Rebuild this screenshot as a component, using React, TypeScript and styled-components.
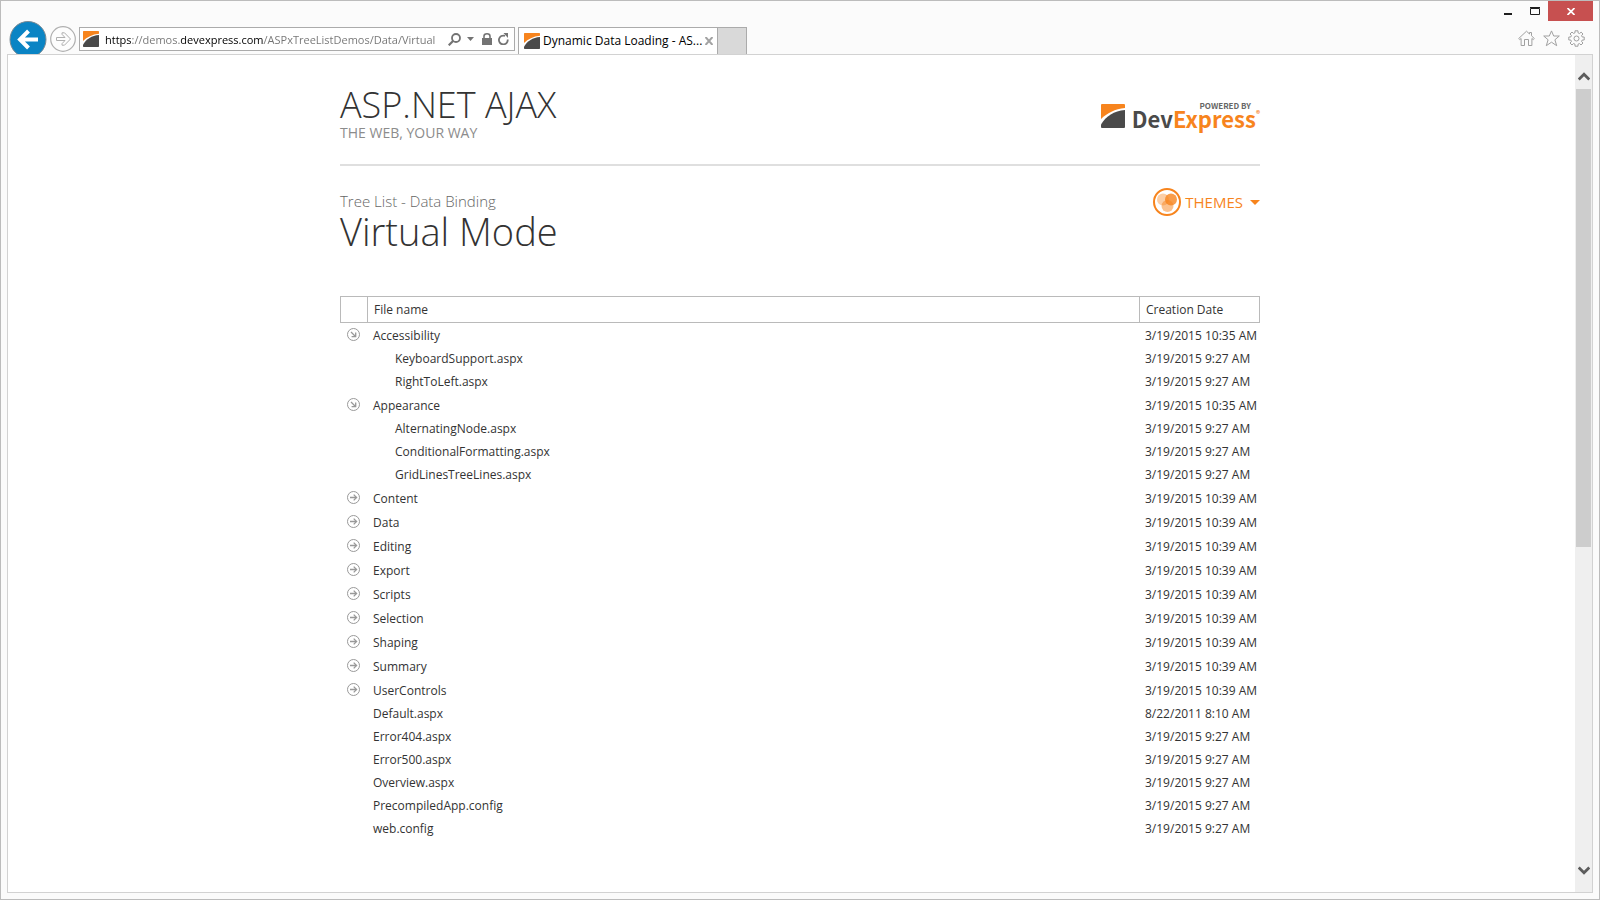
import React, { useState } from "react";
import styled, { createGlobalStyle } from "styled-components";

const GlobalStyle = createGlobalStyle`
  * { box-sizing: border-box; }
  body { margin: 0; background: #fbfbfb; color: #333; font: 12px/16px "Open Sans", "Noto Sans", sans-serif; }
  button { font: inherit; color: inherit; background: none; border: 0; padding: 0; cursor: pointer; }
  svg { display: block; }
`;

const Window = styled.div`
  display: flex;
  flex-direction: column;
  min-height: 100vh;
  border: 1px solid #bcbcbc;
  background: #fbfbfb;
  padding: 0 6px 6px;
`;

const TitleBar = styled.div`
  display: flex;
  justify-content: flex-end;
  height: 20px;
`;

const WindowButton = styled.button<{ $close?: boolean }>`
  display: flex;
  align-items: center;
  justify-content: center;
  width: ${(p) => (p.$close ? 45 : 27)}px;
  height: 20px;
  background: ${(p) => (p.$close ? "#c75050" : "transparent")};
`;

const Toolbar = styled.div`
  display: flex;
  height: 33px;
  overflow: hidden;
`;

const BackButton = styled.button`
  width: 38px;
  height: 38px;
  margin-left: 2px;
`;

const ForwardButton = styled.button`
  width: 26px;
  height: 26px;
  margin: 5px 3px 0;
`;

const AddressBar = styled.div`
  display: flex;
  align-items: center;
  width: 436px;
  height: 24px;
  margin-top: 6px;
  padding: 0 5px 0 3px;
  gap: 6px;
  border: 1px solid #ababab;
  background: #fff;
`;

const AddressInput = styled.input`
  flex: 1;
  min-width: 0;
  height: 22px;
  padding: 0;
  border: 0;
  outline: 0;
  font: 11px/20px "Open Sans", "Noto Sans", sans-serif;
  color: transparent;
  background: linear-gradient(to right, #000 0 27px, #737373 27px 75px, #000 75px 159px, #737373 159px);
  background-clip: text;
  -webkit-background-clip: text;
`;

const TabStrip = styled.div`
  display: flex;
  margin: 6px 0 0 3px;
`;

const Tab = styled.div`
  display: flex;
  align-items: center;
  gap: 3px;
  width: 200px;
  padding: 0 4px 0 5px;
  border: 1px solid #ababab;
  border-bottom: 0;
  background: #fff;
`;

const TabTitle = styled.button`
  flex: 1;
  min-width: 0;
  white-space: nowrap;
  text-align: left;
  color: #000;
`;

const NewTab = styled.button`
  width: 29px;
  border: 1px solid #ababab;
  border-width: 1px 1px 0 0;
  background: #d9d9d9;
`;

const Tools = styled.div`
  display: flex;
  align-items: flex-start;
  gap: 8px;
  margin: 9px 8px 0 auto;
`;

const Viewport = styled.div`
  display: flex;
  flex: 1;
  border: 1px solid #d2d2d2;
  background: #fff;
`;

const Page = styled.main`
  flex: 1;
  min-width: 0;
  padding: 0 15px 40px 32px;
`;

const Content = styled.div`
  max-width: 920px;
  margin: 0 auto;
`;

const Header = styled.header`
  display: flex;
  justify-content: space-between;
  height: 111px;
  padding-top: 28px;
  border-bottom: 2px solid #dfdfdf;
`;

const SiteTitle = styled.div`
  font-size: 36px;
  font-weight: 300;
  line-height: 44px;
`;

const Tagline = styled.div`
  color: #8c8c8c;
  font-size: 14px;
  line-height: 12px;
`;

const Brand = styled.a`
  display: flex;
  gap: 7px;
  margin-top: 15px;
  height: 40px;
  color: #4a4a4a;
  text-decoration: none;
  font-family: "Noto Sans CJK SC", "Open Sans", sans-serif;
  font-weight: 700;
`;

const BrandMark = styled.span`
  padding-top: 6px;
`;

const BrandText = styled.span`
  display: flex;
  flex-direction: column;
`;

const Powered = styled.span`
  padding: 4px 9px 0 0;
  font-size: 8px;
  line-height: 8px;
  text-align: right;
  color: #666;
`;

const BrandName = styled.span`
  display: flex;
  font-size: 22px;
  line-height: 16px;
`;

const Orange = styled.span`
  color: #f7841d;
`;

const Registered = styled.span`
  font-size: 8px;
  line-height: 8px;
  color: #f7841d;
`;

const Heading = styled.div`
  display: flex;
  justify-content: space-between;
  height: 130px;
  padding-top: 22px;
`;

const Category = styled.div`
  color: #666;
  font-size: 15px;
  font-weight: 300;
  line-height: 26px;
`;

const PageTitle = styled.h1`
  margin: 0;
  font-size: 38px;
  font-weight: 300;
  line-height: 34px;
`;

const ThemesButton = styled.button`
  display: flex;
  align-items: center;
  gap: 4px;
  height: 28px;
  color: #f7841d;
  font-size: 15px;
`;

const Caret = styled.span`
  margin-left: 3px;
  border: 5px solid transparent;
  border-top-color: #f7841d;
  border-bottom: 0;
`;

const Tree = styled.table`
  width: 100%;
  table-layout: fixed;
  border-collapse: separate;
  border-spacing: 0;
`;

const HeadCell = styled.th<{ $width?: number }>`
  width: ${(p) => (p.$width ? p.$width + "px" : "auto")};
  height: 27px;
  padding: 0 6px;
  border: 1px solid #bababa;
  border-left-width: 0;
  font-weight: 400;
  text-align: left;
  &:first-child { border-left-width: 1px; }
`;

const Row = styled.tr<{ $folder: boolean }>`
  height: ${(p) => (p.$folder ? 24 : 23)}px;
`;

const Cell = styled.td<{ $indent?: boolean; $folder?: boolean }>`
  padding: ${(p) => (p.$folder ? 2 : 0)}px 0 0 ${(p) => (p.$indent ? 27 : 5)}px;
  white-space: nowrap;
`;

const ToggleCell = styled.td`
  padding: 0 0 2px 7px;
`;

const Toggle = styled.button`
  display: block;
  width: 13px;
  height: 13px;
`;

const ScrollBar = styled.div`
  display: flex;
  flex-direction: column;
  width: 17px;
  padding: 0 0 13px;
  background: #efefef;
`;

const ScrollButton = styled.button<{ $tall?: boolean }>`
  display: flex;
  align-items: flex-end;
  justify-content: center;
  height: ${(p) => (p.$tall ? 34 : 17)}px;
  padding-bottom: ${(p) => (p.$tall ? 8 : 4)}px;
`;

const Track = styled.div`
  flex: 1;
  padding: 0 1px;
`;

const Thumb = styled.div`
  height: 59.3%;
  background: #cdcdcd;
`;

const Logo = ({ size }: { size: number }) => (
  <svg width={size} height={size} viewBox="0 0 24 24" aria-hidden="true">
    <path d="M0 1Q0 0 1 0H23Q24 0 24 1V4C14 5 6 9 0 15Z" fill="#f7841d" />
    <path d="M24 6V23Q24 24 23 24H1Q0 24 0 23V20.5C5 12 13 7 24 6Z" fill="#4a4a4a" />
  </svg>
);

const TreeArrow = ({ open }: { open: boolean }) => (
  <svg width="13" height="13" viewBox="0 0 13 13" fill="none" stroke="#999">
    <circle cx="6.5" cy="6.5" r="6" />
    {open ? (
      <path d="M4 4L8.5 8.5M8.7 4.6V8.7H4.6" strokeWidth="1.3" />
    ) : (
      <path d="M3 6.5H9.5M6.7 3.6L9.6 6.5L6.7 9.4" strokeWidth="1.3" />
    )}
  </svg>
);

type Node = { name: string; date: string; children?: Node[] };

const file = (name: string, date = "3/19/2015 9:27 AM"): Node => ({ name, date });
const folder = (name: string, date = "3/19/2015 10:39 AM", children: Node[] = []): Node => ({ name, date, children });

const nodes: Node[] = [
  folder("Accessibility", "3/19/2015 10:35 AM", [file("KeyboardSupport.aspx"), file("RightToLeft.aspx")]),
  folder("Appearance", "3/19/2015 10:35 AM", [
    file("AlternatingNode.aspx"),
    file("ConditionalFormatting.aspx"),
    file("GridLinesTreeLines.aspx"),
  ]),
  ...["Content", "Data", "Editing", "Export", "Scripts", "Selection", "Shaping", "Summary", "UserControls"].map((n) => folder(n)),
  file("Default.aspx", "8/22/2011 8:10 AM"),
  file("Error404.aspx"),
  file("Error500.aspx"),
  file("Overview.aspx"),
  file("PrecompiledApp.config"),
  file("web.config"),
];

function FileTree() {
  const [open, setOpen] = useState<string[]>(["Accessibility", "Appearance"]);
  const toggle = (name: string) =>
    setOpen((o) => (o.includes(name) ? o.filter((n) => n !== name) : [...o, name]));

  return (
    <Tree>
      <thead>
        <tr>
          <HeadCell $width={28} aria-label="Expand" />
          <HeadCell>File name</HeadCell>
          <HeadCell $width={120}>Creation Date</HeadCell>
        </tr>
      </thead>
      <tbody>
        {nodes.map((n) => {
          const expanded = open.includes(n.name);
          const isFolder = !!n.children;
          return (
            <React.Fragment key={n.name}>
              <Row $folder={isFolder}>
                <ToggleCell>
                  {isFolder && (
                    <Toggle aria-label={n.name} aria-expanded={expanded} onClick={() => toggle(n.name)}>
                      <TreeArrow open={expanded} />
                    </Toggle>
                  )}
                </ToggleCell>
                <Cell $folder={isFolder}>{n.name}</Cell>
                <Cell $folder={isFolder}>{n.date}</Cell>
              </Row>
              {expanded &&
                n.children?.map((c) => (
                  <Row key={c.name} $folder={false}>
                    <ToggleCell />
                    <Cell $indent>{c.name}</Cell>
                    <Cell>{c.date}</Cell>
                  </Row>
                ))}
            </React.Fragment>
          );
        })}
      </tbody>
    </Tree>
  );
}

function BrowserChrome() {
  return (
    <>
      <TitleBar>
        <WindowButton aria-label="Minimize">
          <svg width="8" height="8"><path d="M0 6H8V8H0Z" fill="#1e1e1e" /></svg>
        </WindowButton>
        <WindowButton aria-label="Maximize">
          <svg width="10" height="8"><path d="M.5 1.5H9.5V7.5H.5Z M0 .5H10" fill="none" stroke="#1e1e1e" /></svg>
        </WindowButton>
        <WindowButton $close aria-label="Close">
          <svg width="8" height="7" viewBox="0 0 8 7"><path d="M.5 0L7.5 7M7.5 0L.5 7" stroke="#fff" strokeWidth="1.7" /></svg>
        </WindowButton>
      </TitleBar>
      <Toolbar>
        <BackButton aria-label="Back">
          <svg width="38" height="38" viewBox="0 0 38 38">
            <circle cx="19" cy="18.5" r="18" fill="#0a84c4" stroke="#7a8a94" />
            <path d="M29 18.5H11M19.5 10L11 18.5L19.5 27" fill="none" stroke="#fff" strokeWidth="4" />
          </svg>
        </BackButton>
        <ForwardButton aria-label="Forward">
          <svg width="26" height="26" viewBox="0 0 26 26" fill="none" stroke="#b0b0b0">
            <circle cx="13" cy="13" r="12.3" fill="#fdfdfd" strokeWidth="1.2" />
            <path d="M6.5 11.5H15L12 8.3V6.8H14.5L20.5 13L14.5 19.2H12V17.7L15 14.5H6.5Z" />
          </svg>
        </ForwardButton>
        <AddressBar>
          <Logo size={16} />
          <AddressInput aria-label="Address" defaultValue="https://demos.devexpress.com/ASPxTreeListDemos/Data/Virtual" />
          <button aria-label="Search">
            <svg width="13" height="13" viewBox="0 0 13 13" fill="none" stroke="#737373">
              <circle cx="8" cy="5" r="4" strokeWidth="1.8" /><path d="M5 8L.7 12.3" strokeWidth="2.2" />
            </svg>
          </button>
          <button aria-label="Show suggestions">
            <svg width="7" height="4"><path d="M0 0H7L3.5 4Z" fill="#737373" /></svg>
          </button>
          <button aria-label="Security report">
            <svg width="12" height="12" viewBox="0 0 12 12">
              <path d="M2 5H12V12H2Z" fill="#737373" /><path d="M4 5V3.2Q4 .8 7 .8T10 3.2V5" fill="none" stroke="#737373" strokeWidth="1.6" />
            </svg>
          </button>
          <button aria-label="Refresh">
            <svg width="11" height="12" viewBox="0 0 11 12">
              <path d="M9.7 6.5A4.4 4.4 0 1 1 7 2.9" fill="none" stroke="#737373" strokeWidth="1.8" /><path d="M5.5 0H10V5Z" fill="#737373" />
            </svg>
          </button>
        </AddressBar>
        <TabStrip>
          <Tab>
            <Logo size={16} />
            <TabTitle>Dynamic Data Loading - AS...</TabTitle>
            <button aria-label="Close tab">
              <svg width="8" height="8" viewBox="0 0 8 8"><path d="M.5 0L7.5 8M7.5 0L.5 8" stroke="#a3a3a3" strokeWidth="2" /></svg>
            </button>
          </Tab>
          <NewTab aria-label="New tab" />
        </TabStrip>
        <Tools>
          <button aria-label="Home">
            <svg width="17" height="17" viewBox="0 0 17 17" fill="none" stroke="#a0a0a0">
              <path d="M.7 8.5L8.5 1.2L11.5 4V2.5H13.5V5.8L16.3 8.5L15.3 9.6L13.9 8.5V15.5H10.5V9.5H6.5V15.5H3.1V8.5L1.7 9.6Z" />
            </svg>
          </button>
          <button aria-label="Favorites">
            <svg width="17" height="17" viewBox="0 0 17 17" fill="none" stroke="#a0a0a0" strokeLinejoin="round">
              <path d="M8.5 .9L10.7 6H16.3L11.9 9.8L13.7 15.7L8.5 12.2L3.3 15.7L5.1 9.8L.7 6H6.3Z" />
            </svg>
          </button>
          <button aria-label="Tools">
            <svg width="17" height="17" viewBox="0 0 17 17" fill="none" stroke="#a0a0a0">
              <path d="M7 .8H10V2.8L11.6 3.5L13.1 2.1L15 4L13.6 5.4L14.2 7H16.2V10H14.2L13.6 11.6L15 13L13 15L11.6 13.6L10 14.2V16.2H7V14.2L5.4 13.6L4 15L2 13L3.4 11.6L2.8 10H.8V7H2.8L3.4 5.4L2 4L4 2L5.4 3.4L7 2.8Z" />
              <circle cx="8.5" cy="8.5" r="2.5" />
            </svg>
          </button>
        </Tools>
      </Toolbar>
    </>
  );
}

export default function App() {
  return (
    <Window>
      <GlobalStyle />
      <BrowserChrome />
      <Viewport>
        <Page>
          <Content>
            <Header>
              <div>
                <SiteTitle>ASP.NET AJAX</SiteTitle>
                <Tagline>THE WEB, YOUR WAY</Tagline>
              </div>
              <Brand href="#">
                <BrandMark><Logo size={24} /></BrandMark>
                <BrandText>
                  <Powered>POWERED BY</Powered>
                  <BrandName>Dev<Orange>Express</Orange><Registered>®</Registered></BrandName>
                </BrandText>
              </Brand>
            </Header>
            <Heading>
              <div>
                <Category>Tree List - Data Binding</Category>
                <PageTitle>Virtual Mode</PageTitle>
              </div>
              <ThemesButton>
                <svg width="28" height="28" viewBox="0 0 28 28" fill="#f7841d">
                  <circle cx="14" cy="14" r="13" fill="none" stroke="#f7841d" strokeWidth="2" />
                  <circle cx="10" cy="11.5" r="6" opacity=".4" />
                  <circle cx="18" cy="11.5" r="6" opacity=".8" />
                  <circle cx="14.5" cy="18" r="6" opacity=".5" />
                </svg>
                THEMES
                <Caret />
              </ThemesButton>
            </Heading>
            <FileTree />
          </Content>
        </Page>
        <ScrollBar>
          <ScrollButton $tall aria-label="Scroll up">
            <svg width="12" height="9" viewBox="0 0 12 9"><path d="M.7 7.5L6 2.2L11.3 7.5" fill="none" stroke="#5c5c5c" strokeWidth="2.8" /></svg>
          </ScrollButton>
          <Track><Thumb /></Track>
          <ScrollButton aria-label="Scroll down">
            <svg width="12" height="9" viewBox="0 0 12 9"><path d="M.7 1.5L6 6.8L11.3 1.5" fill="none" stroke="#5c5c5c" strokeWidth="2.8" /></svg>
          </ScrollButton>
        </ScrollBar>
      </Viewport>
    </Window>
  );
}
